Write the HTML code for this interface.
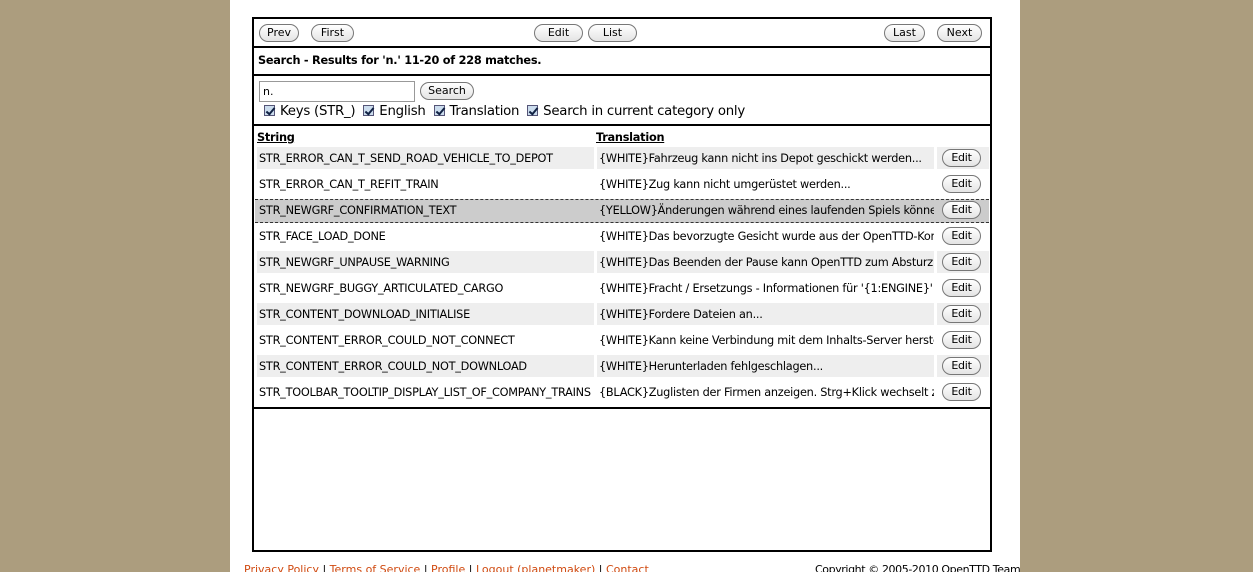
<!DOCTYPE html>
<html><head><meta charset="utf-8"><style>
*{box-sizing:border-box}
body{margin:0;width:1253px;height:572px;overflow:hidden;background:#ac9d7e;font-family:"DejaVu Sans","Liberation Sans",sans-serif;font-size:12px;color:#000}
#page{position:absolute;left:230px;top:0;width:790px;height:572px;background:#fff;overflow:hidden}
#box{position:absolute;left:22px;top:17px;width:740px;height:535px;border:2px solid #000}
.btn{position:absolute;height:18px;border:1px solid #777;border-radius:9px;background:linear-gradient(#fff,#e4e4e4);font-size:11px;line-height:16px;text-align:center}
.bar{position:absolute;left:0;width:736px;border-bottom:2px solid #000}
.row{position:absolute;left:3px;width:732px;height:24px;font-size:11.3px;letter-spacing:-0.25px;white-space:nowrap}
.c1,.c2,.c3{position:absolute;top:0;height:22px;line-height:24px;overflow:hidden;padding-left:2px}
.c1{left:0;width:337px}.c2{left:340px;width:337px}.c3{left:680px;width:52px}
.g .c1,.g .c2,.g .c3{background:#eee}
.sel{background:#ccc;border-top:1px dashed #333;border-bottom:1px dashed #333}
.sel .c1,.sel .c2{background:#ccc}
.cb{display:inline-block;width:11px;height:11px;border:1px solid #557;background:#cde;vertical-align:-1px;margin-right:5px;position:relative}
.cb:after{content:"";position:absolute;left:3px;top:0;width:3px;height:7px;border:solid #124;border-width:0 2px 2px 0;transform:rotate(40deg)}
.foot{position:absolute;top:563px;font-size:11px;color:#d04a10;white-space:nowrap}
</style></head><body>
<div id="page">
<div id="box">
<div class="bar" style="top:0;height:29px"></div>
<div class="btn" style="left:5px;top:5px;width:40px">Prev</div>
<div class="btn" style="left:57px;top:5px;width:43px">First</div>
<div class="btn" style="left:280px;top:5px;width:49px">Edit</div>
<div class="btn" style="left:334px;top:5px;width:49px">List</div>
<div class="btn" style="left:630px;top:5px;width:41px">Last</div>
<div class="btn" style="left:683px;top:5px;width:45px">Next</div>
<div class="bar" style="top:29px;height:28px"></div>
<div style="position:absolute;left:4px;top:35px;font-weight:bold;font-size:11.3px;letter-spacing:-0.25px">Search - Results for 'n.' 11-20 of 228 matches.</div>
<div class="bar" style="top:57px;height:50px"></div>
<div style="position:absolute;left:5px;top:62px;width:156px;height:21px;border:1px solid #999;font-size:11px;padding:3px">n.</div>
<div class="btn" style="left:166px;top:63px;width:54px">Search</div>
<div style="position:absolute;left:10px;top:85px;font-size:13.3px;letter-spacing:-0.25px;white-space:nowrap"><span class="cb"></span>Keys (STR_)&nbsp; <span class="cb"></span>English&nbsp; <span class="cb"></span>Translation&nbsp; <span class="cb"></span>Search in current category only</div>
<div style="position:absolute;left:3px;top:112px;font-weight:bold;text-decoration:underline;font-size:11.3px;letter-spacing:-0.25px">String</div>
<div style="position:absolute;left:342px;top:112px;font-weight:bold;text-decoration:underline;font-size:11.3px;letter-spacing:-0.25px">Translation</div>

<div class="row g" style="top:128px"><div class="c1">STR_ERROR_CAN_T_SEND_ROAD_VEHICLE_TO_DEPOT</div><div class="c2">{WHITE}Fahrzeug kann nicht ins Depot geschickt werden...</div><div class="c3"><div class="btn" style="left:5px;top:2px;width:39px;line-height:16px">Edit</div></div></div>
<div class="row" style="top:154px"><div class="c1">STR_ERROR_CAN_T_REFIT_TRAIN</div><div class="c2">{WHITE}Zug kann nicht umgerüstet werden...</div><div class="c3"><div class="btn" style="left:5px;top:2px;width:39px;line-height:16px">Edit</div></div></div>
<div class="row sel" style="top:180px;left:1px;width:734px"><div class="c1" style="left:2px;line-height:22px">STR_NEWGRF_CONFIRMATION_TEXT</div><div class="c2" style="left:342px;line-height:22px">{YELLOW}Änderungen während eines laufenden Spiels können</div><div class="c3" style="left:682px"><div class="btn" style="left:5px;top:1px;width:39px;line-height:16px">Edit</div></div></div>
<div class="row" style="top:206px"><div class="c1">STR_FACE_LOAD_DONE</div><div class="c2">{WHITE}Das bevorzugte Gesicht wurde aus der OpenTTD-Konfiguration</div><div class="c3"><div class="btn" style="left:5px;top:2px;width:39px;line-height:16px">Edit</div></div></div>
<div class="row g" style="top:232px"><div class="c1">STR_NEWGRF_UNPAUSE_WARNING</div><div class="c2">{WHITE}Das Beenden der Pause kann OpenTTD zum Absturz bringen</div><div class="c3"><div class="btn" style="left:5px;top:2px;width:39px;line-height:16px">Edit</div></div></div>
<div class="row" style="top:258px"><div class="c1">STR_NEWGRF_BUGGY_ARTICULATED_CARGO</div><div class="c2">{WHITE}Fracht / Ersetzungs - Informationen für '{1:ENGINE}' weichen</div><div class="c3"><div class="btn" style="left:5px;top:2px;width:39px;line-height:16px">Edit</div></div></div>
<div class="row g" style="top:284px"><div class="c1">STR_CONTENT_DOWNLOAD_INITIALISE</div><div class="c2">{WHITE}Fordere Dateien an...</div><div class="c3"><div class="btn" style="left:5px;top:2px;width:39px;line-height:16px">Edit</div></div></div>
<div class="row" style="top:310px"><div class="c1">STR_CONTENT_ERROR_COULD_NOT_CONNECT</div><div class="c2">{WHITE}Kann keine Verbindung mit dem Inhalts-Server herstellen</div><div class="c3"><div class="btn" style="left:5px;top:2px;width:39px;line-height:16px">Edit</div></div></div>
<div class="row g" style="top:336px"><div class="c1">STR_CONTENT_ERROR_COULD_NOT_DOWNLOAD</div><div class="c2">{WHITE}Herunterladen fehlgeschlagen...</div><div class="c3"><div class="btn" style="left:5px;top:2px;width:39px;line-height:16px">Edit</div></div></div>
<div class="row" style="top:362px"><div class="c1">STR_TOOLBAR_TOOLTIP_DISPLAY_LIST_OF_COMPANY_TRAINS</div><div class="c2">{BLACK}Zuglisten der Firmen anzeigen. Strg+Klick wechselt zwischen</div><div class="c3"><div class="btn" style="left:5px;top:2px;width:39px;line-height:16px">Edit</div></div></div>
<div class="bar" style="top:0;height:390px"></div>
</div>
<div style="position:absolute;left:10px;top:550px;width:766px;border-top:1px solid #ddd;z-index:-1"></div>
<div class="foot" style="left:14px">Privacy Policy <span style="color:#000">|</span> Terms of Service <span style="color:#000">|</span> Profile <span style="color:#000">|</span> Logout (planetmaker) <span style="color:#000">|</span> Contact</div>
<div class="foot" style="left:585px;color:#000;letter-spacing:-0.4px">Copyright © 2005-2010 OpenTTD Team</div>
</div>
</body></html>
